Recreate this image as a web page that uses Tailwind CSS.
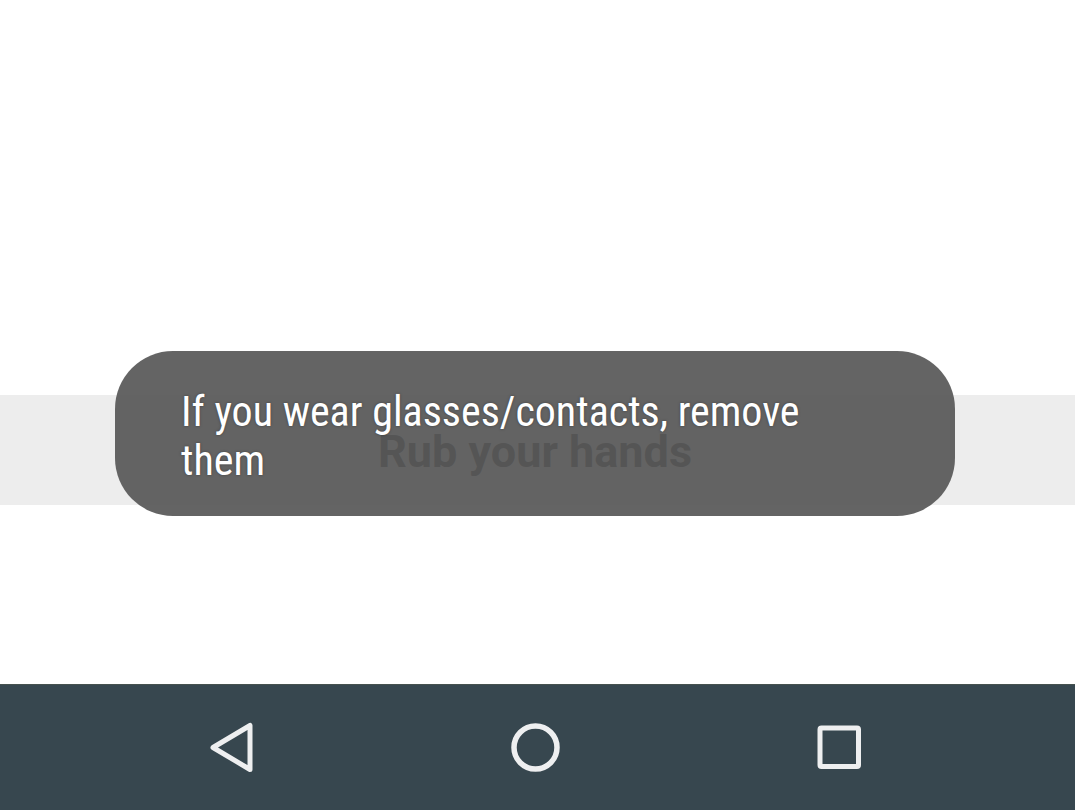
<!DOCTYPE html>
<html lang="en">
<head>
<meta charset="utf-8">
<meta name="viewport" content="width=device-width, initial-scale=1">
<title>Rub your hands</title>
<script src="https://cdn.jsdelivr.net/npm/@tailwindcss/browser@4"></script>
</head>
<body class="flex min-h-screen flex-col bg-white font-['Roboto',sans-serif]">
  <main class="flex flex-1 flex-col justify-end pb-[179px]">
    <section class="relative">
      <button type="button" class="block h-[110px] w-full bg-[#ededed] pt-1 pr-[5px] text-center text-[45px] font-bold text-[#2b2b2b]">Rub your hands</button>
      <div role="status" class="absolute inset-x-[115px] -top-11 mr-[5px] rounded-[58px] bg-[#585858]/93 pt-9 pr-[66px] pb-[31px] pl-[66px]">
        <p class="font-['Roboto_Condensed','Liberation_Sans_Narrow','Roboto',sans-serif] text-[42px] leading-[49px] text-white text-shadow-[0_0_3px_rgb(0_0_0/0.35)]">If you wear glasses/contacts, remove them</p>
      </div>
    </section>
  </main>
  <nav aria-label="System" class="flex h-[126px] items-center justify-center gap-52 border-t border-[#46524f] bg-[#37474f] pr-[5px] text-[#eeeff0]">
    <button type="button" aria-label="Back" class="size-24">
      <svg viewBox="0 0 96 96" class="size-full" fill="none" stroke="currentColor" stroke-width="5" stroke-linejoin="round"><path d="M67 25.500V69.500L30 47.500Z"/></svg>
    </button>
    <button type="button" aria-label="Home" class="size-24">
      <svg viewBox="0 0 96 96" class="size-full" fill="none" stroke="currentColor" stroke-width="5.500"><circle cx="48.500" cy="47.500" r="21.500"/></svg>
    </button>
    <button type="button" aria-label="Recent apps" class="size-24">
      <svg viewBox="0 0 96 96" class="size-full" fill="none" stroke="currentColor" stroke-width="5"><rect x="29" y="28" width="38.500" height="38.500" rx="1.500"/></svg>
    </button>
  </nav>
</body>
</html>
